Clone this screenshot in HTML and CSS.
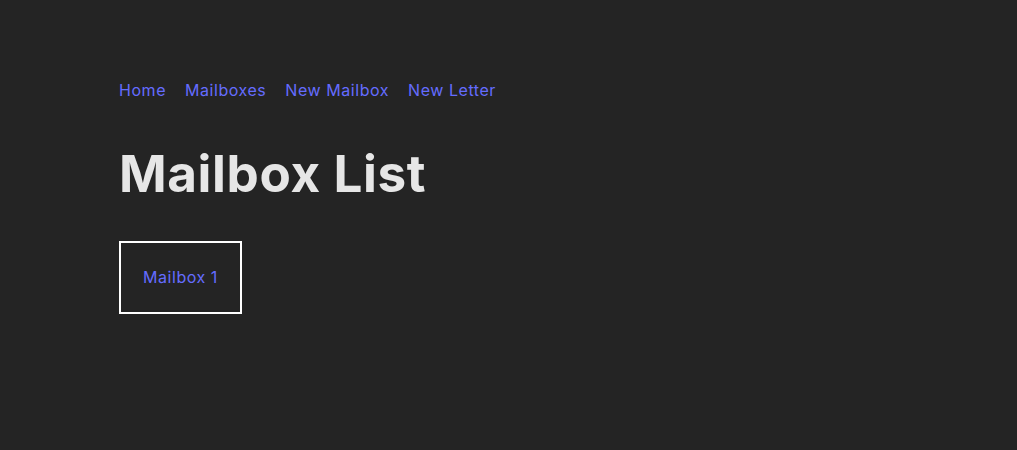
FILE: index.html
```html
<!DOCTYPE html>
<html lang="en">
<head>
<meta charset="utf-8">
<title>Mailbox List</title>
<link rel="stylesheet" href="styles.css">
</head>
<body>
<div class="page">
  <nav class="nav">
    <a href="#">Home</a>
    <a href="#">Mailboxes</a>
    <a href="#">New Mailbox</a>
    <a href="#">New Letter</a>
  </nav>
  <h1 class="title">Mailbox List</h1>
  <ul class="list">
    <li class="card"><a href="#">Mailbox 1</a></li>
  </ul>
</div>
</body>
</html>
```
FILE: styles.css
```css
html, body {
  margin: 0;
  padding: 0;
  background: #242424;
  height: 100%;
}
body {
  font-family: Inter, "Noto Sans", sans-serif;
  font-size: 16px;
  line-height: 24px;
  color: rgba(255, 255, 255, 0.87);
}
a {
  color: #646cff;
  text-decoration: none;
  font-weight: 400;
  letter-spacing: 0.55px;
}
.page {
  padding: 78px 119px 0;
}
.nav {
  display: flex;
  gap: 19px;
}
.title {
  margin: 43px 0 0;
  font-size: 3.2em;
  line-height: 1.1;
  font-weight: 700;
  letter-spacing: 0.6px;
  color: #e6e6e6;
}
.list {
  list-style: none;
  margin: 40px 0 0;
  padding: 0;
  display: flex;
}
.card {
  border: 2px solid #fff;
  padding: 22px 22px 23px 22px;
  line-height: 24px;
}
```
